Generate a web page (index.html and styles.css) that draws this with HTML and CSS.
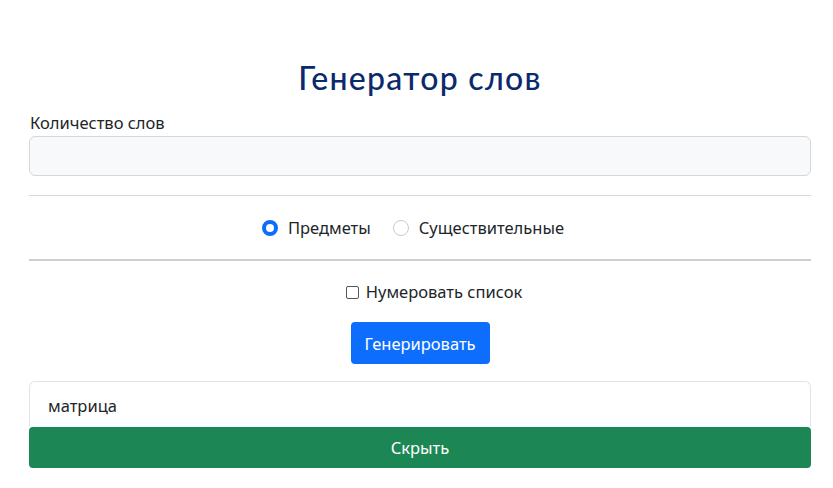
FILE: index.html
```html
<!DOCTYPE html>
<html lang="ru">
<head>
<meta charset="utf-8">
<title>Генератор слов</title>
<link rel="stylesheet" href="styles.css">
</head>
<body>
<main class="container">
  <h1 class="title">Генератор слов</h1>
  <label class="label" for="count">Количество слов</label>
  <input class="field" id="count" type="text">
  <hr class="sep">
  <div class="radios">
    <label class="radio"><span class="dot checked"></span>Предметы</label>
    <label class="radio"><span class="dot"></span>Существительные</label>
  </div>
  <hr class="sep thick">
  <div class="check-row">
    <label class="check"><span class="box"></span>Нумеровать список</label>
  </div>
  <div class="btn-row">
    <button class="btn-primary" type="button">Генерировать</button>
  </div>
  <div class="result">
    <div class="item">матрица</div>
    <button class="btn-success" type="button">Скрыть</button>
  </div>
</main>
</body>
</html>
```
FILE: styles.css
```css
* { box-sizing: border-box; }
html, body { margin: 0; background: #fff; }
body {
  font-family: "Noto Sans", "Open Sans", sans-serif;
  font-size: 16.5px;
  color: #212529;
}
.container {
  width: 782px;
  margin-left: 29px;
  padding-top: 58px;
}
.title {
  margin: 0;
  font-family: Lato, "Noto Sans", sans-serif;
  font-weight: 500;
  font-size: 32px;
  line-height: 40px;
  color: #0b2a6b;
  text-align: center;
  letter-spacing: 1.3px;
}
.label {
  display: block;
  margin-top: 13px;
  line-height: 24px;
  padding-left: 1px;
}
.field {
  display: block;
  width: 100%;
  height: 40px;
  margin-top: 1px;
  background: #f8f9fa;
  border: 1px solid #d5d8db;
  border-radius: 6px;
  font: inherit;
}
.sep {
  margin: 19px 0 0;
  border: 0;
  border-top: 1px solid #d9d9d9;
}
.sep.thick {
  margin-top: 0;
  border-top: 2px solid #cfcfcf;
}
.radios {
  display: flex;
  justify-content: center;
  align-items: center;
  gap: 22px;
  height: 63px;
  padding-right: 14px;
}
.radio {
  display: flex;
  align-items: center;
  gap: 10px;
}
.dot {
  width: 16px;
  height: 16px;
  border-radius: 50%;
  border: 1px solid #c6cacf;
  background: #fff;
}
.dot.checked {
  border: 4.5px solid #0d6efd;
  background: #fff;
}
.check-row {
  display: flex;
  justify-content: center;
  margin-top: 19px;
  line-height: 24px;
  padding-left: 28px;
}
.check {
  display: flex;
  align-items: center;
  gap: 7px;
}
.box {
  width: 13px;
  height: 13px;
  border: 1px solid #555;
  border-radius: 2px;
  background: #fff;
}
.btn-row {
  display: flex;
  justify-content: center;
  margin-top: 18px;
}
.btn-primary {
  width: 139px;
  height: 42px;
  background: #0d6efd;
  color: #fff;
  border: 0;
  border-radius: 4px;
  font: inherit;
}
.result {
  margin-top: 17px;
}
.item {
  height: 46px;
  border: 1px solid #e1e4e7;
  border-bottom: 0;
  border-radius: 6px 6px 0 0;
  padding: 12px 18px 0;
  line-height: 24px;
}
.btn-success {
  display: block;
  width: 100%;
  height: 41px;
  background: #1c8754;
  color: #fff;
  border: 0;
  border-radius: 4px;
  font: inherit;
}
```
